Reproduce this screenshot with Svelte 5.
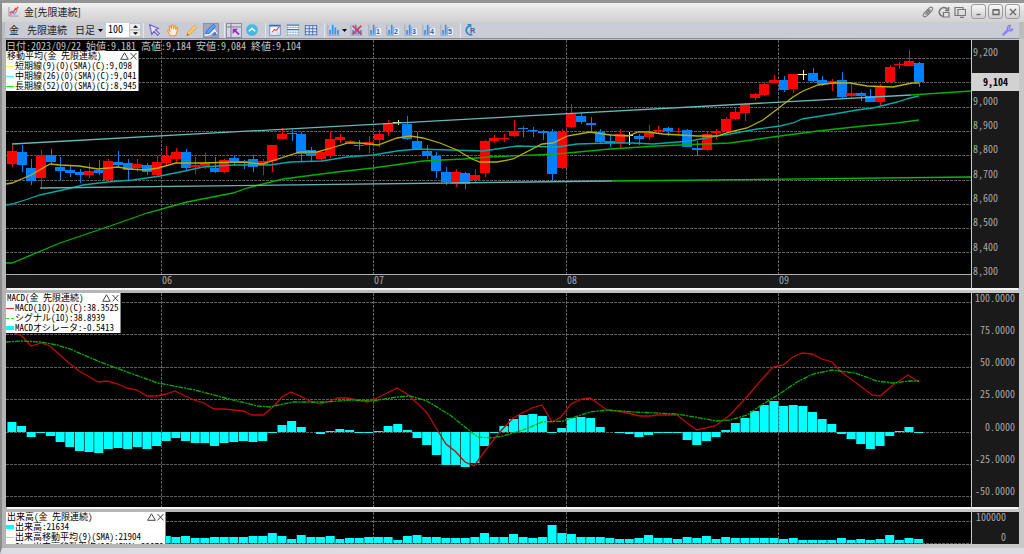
<script lang="ts">
	type Point = [number, number];

	const step = 9.646;
	const firstX = 12;
	const xAt = (i: number) => firstX + i * step;

	// kind (r = up, b = down, y = unchanged), body top, body bottom, high, low
	const candles: [string, number, number, number, number][] = [
		['r', 151, 164, 145, 167], ['b', 152, 165, 145, 172], ['b', 168, 181, 159, 185], ['r', 155, 178, 150, 188],
		['b', 155, 162, 149, 164], ['b', 167, 171, 157, 180], ['b', 170, 173, 166, 177], ['b', 172, 175, 169, 183],
		['r', 171, 175, 163, 178], ['b', 170, 173, 160, 175], ['r', 161, 180, 159, 182], ['b', 162, 165, 151, 167],
		['b', 163, 170, 159, 180], ['r', 164, 168, 159, 172], ['b', 165, 172, 163, 175], ['r', 162, 175, 156, 177],
		['r', 156, 163, 146, 165], ['r', 152, 159, 148, 163], ['b', 152, 168, 149, 171], ['r', 165, 167, 157, 174],
		['r', 163, 166, 153, 169], ['b', 168, 172, 157, 173], ['r', 160, 172, 159, 173], ['b', 158, 162, 156, 166],
		['b', 161, 162, 160, 169], ['b', 159, 167, 155, 172], ['r', 161, 165, 159, 175], ['r', 145, 161, 145, 172],
		['r', 134, 139, 128, 139], ['b', 133, 134, 129, 141], ['b', 134, 154, 132, 162], ['b', 150, 156, 147, 162],
		['r', 152, 159, 151, 162], ['r', 139, 156, 131, 158], ['r', 137, 140, 134, 143], ['r', 141, 143, 140, 144],
		['b', 145, 146, 140, 150], ['r', 142, 145, 136, 153], ['r', 134, 140, 130, 147], ['r', 123, 131, 120, 136],
		['y', 122, 123, 120, 125], ['b', 124, 139, 116, 140], ['b', 141, 149, 132, 150], ['b', 151, 156, 145, 159],
		['b', 156, 171, 152, 178], ['b', 172, 182, 167, 185], ['r', 172, 184, 169, 187], ['b', 173, 184, 172, 189],
		['r', 175, 180, 169, 182], ['r', 141, 173, 140, 177], ['r', 138, 141, 135, 143], ['r', 138, 139, 134, 142],
		['r', 131, 136, 120, 137], ['b', 128, 129, 126, 137], ['b', 130, 131, 127, 137], ['b', 131, 133, 130, 140],
		['b', 132, 174, 129, 182], ['r', 132, 168, 129, 169], ['r', 114, 127, 104, 128], ['b', 116, 122, 113, 124],
		['b', 123, 125, 117, 131], ['b', 132, 142, 129, 144], ['b', 141, 143, 134, 147], ['r', 134, 143, 129, 149],
		['y', 135, 136, 132, 145], ['b', 136, 139, 134, 145], ['r', 133, 137, 125, 140], ['r', 130, 131, 126, 133],
		['b', 128, 131, 127, 136], ['r', 131, 132, 128, 133], ['b', 130, 147, 129, 147], ['b', 148, 150, 141, 156],
		['r', 134, 150, 132, 151], ['r', 131, 133, 129, 139], ['r', 119, 131, 117, 133], ['r', 112, 119, 108, 120],
		['r', 104, 113, 103, 121], ['r', 94, 98, 93, 100], ['r', 84, 95, 83, 96], ['r', 80, 83, 75, 83],
		['b', 80, 90, 76, 92], ['r', 74, 89, 74, 93], ['y', 74, 75, 70, 80], ['b', 73, 81, 68, 82],
		['b', 80, 84, 76, 86], ['r', 81, 84, 79, 91], ['b', 80, 97, 72, 98], ['r', 93, 96, 84, 97],
		['b', 93, 96, 92, 101], ['b', 96, 102, 89, 102], ['r', 86, 102, 84, 105], ['r', 67, 82, 65, 83],
		['r', 64, 65, 62, 69], ['r', 61, 66, 50, 66], ['b', 63, 82, 62, 87]
	];

	const candleColors: Record<string, string> = { r: '#ff0000', b: '#0080ff', y: '#ffff80' };

	const shortMa: Point[] = [
		[6, 184], [12, 183], [31, 175], [50, 164], [60, 165], [79, 166], [98, 169], [118, 167], [129, 169], [146, 170],
		[158, 168], [176, 163], [200, 163], [240, 162], [262, 164], [300, 152], [317, 152], [328, 149], [348, 143],
		[360, 143], [378, 145], [397, 138], [410, 136], [423, 138], [440, 143], [457, 150], [472, 159], [480, 162],
		[497, 162], [513, 159], [542, 144], [553, 143], [567, 136], [590, 132], [610, 135], [628, 136], [638, 132],
		[648, 132], [663, 134], [697, 136], [717, 136], [730, 132], [747, 128], [763, 120], [780, 107], [793, 97],
		[803, 91], [818, 85], [833, 83], [850, 83], [867, 86], [893, 87], [912, 83], [919, 83]
	];
	const middleMa: Point[] = [
		[6, 205], [12, 204], [25, 200], [40, 195], [67, 189], [83, 185], [107, 182], [133, 180], [160, 176], [180, 172],
		[203, 167], [233, 165], [270, 165], [290, 162], [322, 161], [347, 157], [373, 155], [397, 151], [417, 149],
		[450, 150], [483, 151], [517, 146], [557, 147], [577, 144], [610, 143], [633, 143], [653, 144], [690, 141],
		[717, 136], [730, 134], [757, 129], [780, 126], [793, 123], [802, 119], [840, 113], [857, 110], [873, 108],
		[897, 102], [910, 98], [919, 96]
	];
	const longMa: Point[] = [
		[6, 263], [12, 263], [60, 243], [113, 225], [147, 213], [187, 202], [233, 193], [247, 188], [283, 179],
		[337, 172], [373, 168], [423, 161], [463, 159], [490, 157], [557, 154], [610, 149], [657, 146], [703, 144],
		[730, 143], [780, 136], [818, 131], [863, 126], [897, 123], [919, 120]
	];

	const macdLine: Point[] = [
		[6, 332], [12, 332], [22, 336], [31, 346], [41, 343], [50, 346], [60, 355], [69, 363], [79, 371], [88, 376],
		[98, 382], [107, 381], [118, 384], [127, 388], [137, 390], [147, 396], [157, 396], [166, 394], [175, 391],
		[185, 396], [194, 400], [204, 403], [214, 409], [224, 409], [243, 411], [252, 415], [263, 415], [273, 407],
		[282, 397], [291, 392], [300, 396], [310, 401], [320, 404], [330, 401], [338, 398], [348, 398], [357, 400],
		[367, 402], [373, 400], [387, 393], [397, 388], [407, 394], [417, 403], [427, 413], [438, 431], [446, 444],
		[455, 451], [465, 462], [474, 466], [485, 451], [498, 434], [513, 418], [522, 413], [532, 408], [542, 405],
		[552, 422], [561, 417], [571, 404], [582, 399], [590, 398], [607, 410], [623, 412], [640, 416], [650, 416],
		[657, 415], [677, 415], [687, 423], [697, 430], [715, 426], [730, 415], [745, 399], [763, 378], [773, 367],
		[783, 365], [793, 357], [802, 353], [812, 354], [822, 359], [832, 362], [840, 371], [855, 382], [872, 395],
		[880, 396], [893, 385], [908, 375], [919, 382]
	];
	const signalLine: Point[] = [
		[6, 342], [22, 341], [41, 342], [57, 345], [70, 349], [100, 362], [130, 373], [158, 383], [195, 390],
		[225, 398], [258, 406], [270, 407], [293, 402], [327, 402], [350, 400], [373, 401], [397, 397], [410, 396],
		[427, 401], [450, 415], [470, 431], [478, 437], [490, 438], [503, 436], [523, 430], [542, 422], [563, 421],
		[590, 412], [607, 410], [633, 412], [677, 414], [717, 421], [730, 420], [747, 415], [763, 404], [778, 395],
		[797, 382], [813, 374], [832, 370], [855, 373], [877, 381], [893, 383], [910, 381], [919, 381]
	];

	const oscillator = [
		10, 6, -5, -1, -4, -10, -15, -19, -20, -21, -17, -16, -17, -15, -17, -14, -9, -6, -9, -11, -11, -14, -11, -10,
		-9, -10, -9, -1, 7, 11, 5, 0, -2, 1, 3, 2, -1, -1, 1, 6, 8, 2, -6, -13, -23, -33, -33, -35, -31, -14, -1, 6,
		13, 17, 18, 16, -1, 4, 14, 15, 14, 5, 0, -1, -2, -5, -3, -1, -1, -1, -8, -13, -9, -5, 2, 9, 14, 21, 27, 31,
		26, 27, 26, 20, 13, 8, -2, -7, -12, -17, -14, -4, 1, 5, -1
	];

	const volumes = [
		6, 6, 7, 6, 5, 6, 6, 5, 6, 6, 7, 6, 6, 5, 6, 6, 7, 6, 7, 5, 5, 6, 6, 6, 6, 7, 7, 10, 7, 4, 8, 6, 6, 7, 4, 5,
		5, 6, 6, 6, 3, 7, 8, 6, 6, 5, 5, 5, 6, 10, 6, 6, 9, 6, 5, 6, 18, 10, 9, 6, 6, 6, 5, 4, 4, 5, 8, 5, 5, 4, 6,
		5, 7, 4, 6, 5, 5, 5, 5, 5, 4, 5, 3, 3, 3, 3, 5, 3, 4, 3, 4, 8, 3, 5, 4
	];

	const monthLines = [161, 373, 566, 778];
	const priceLines = [58, 82, 107, 131, 155, 180, 204, 228, 252];
	const macdGrid = [302, 334, 367, 399, 432, 464, 496];

	const priceLabels = ['9,200', '', '9,000', '8,900', '8,800', '8,700', '8,600', '8,500', '8,400', '8,300'];
	const macdLabels = ['100.0000', '75.0000', '50.0000', '25.0000', '0.0000', '-25.0000', '-50.0000'];

	const priceLegend = [
		{ color: '#ffff40', text: '短期線(9)(0)(SMA)(C):9,098' },
		{ color: '#40ffff', text: '中期線(26)(0)(SMA)(C):9,041' },
		{ color: '#00ff00', text: '長期線(52)(0)(SMA)(C):8,945' }
	];
	const macdLegend = [
		{ color: '#ff2020', text: 'MACD(10)(20)(C):38.3525' },
		{ color: '#20e020', text: 'シグナル(10):38.8939', kind: 'dashed' },
		{ color: '#00ffff', text: 'MACDオシレータ:-0.5413', kind: 'block' }
	];
	const volumeLegend = [
		{ color: '#00ffff', text: '出来高:21634', kind: 'block' },
		{ color: '#80ff80', text: '出来高移動平均(9)(SMA):21904' },
		{ color: '#ffff80', text: 'Slow出来高移動平均(26)(SMA):22070' }
	];

	let barCount = $state(100);
	let period = $state('日足');

	const toPoints = (points: Point[]) => points.map((p) => p.join(',')).join(' ');
</script>

{#snippet legend(title: string, rows: { color: string; text: string; kind?: string }[])}
	<div class="legend">
		<div class="legend-title">
			<span>{title}</span>
			<span class="legend-buttons">
				<button aria-label="折りたたむ">
					<svg viewBox="0 0 9 8"><path d="M4.5 .8 8.3 7.3H.7z" /></svg>
				</button>
				<button aria-label="閉じる">
					<svg viewBox="0 0 7 8"><path d="M.5 1 6.5 7.4M6.5 1 .5 7.4" /></svg>
				</button>
			</span>
		</div>
		{#each rows as row}
			<div class="legend-row">
				<i class="swatch {row.kind ?? ''}" style="color: {row.color}"></i>
				<span>{row.text}</span>
			</div>
		{/each}
	</div>
{/snippet}

{#snippet bars()}
	<path d="M1 2v12h14" fill="none" stroke="#98a4b4" />
	<path d="M2.5 8h2v5h-2zM5.5 2h2v11h-2zM8.5 5h2v8h-2zM11.5 8h2v5h-2z" fill="#3894f4" />
{/snippet}

<div class="window">
	<header class="titlebar">
		<svg class="logo" viewBox="0 0 12 12">
			<path d="M1 1v10h11" fill="none" stroke="#999" />
			<path d="M2 8l2-2 2 1 2-4 1 1 2-3" fill="none" stroke="#f04050" stroke-width="1.5" />
			<path d="M2 10l3-2 2 1 3-4" fill="none" stroke="#6080e0" />
		</svg>
		<h1>金[先限連続]</h1>
		<div class="title-tools">
			<button aria-label="リンク">
				<svg viewBox="0 0 12 12" fill="none" stroke="#808080" stroke-width="1.2">
					<ellipse cx="4.5" cy="7.5" rx="4" ry="2" transform="rotate(-45 4.5 7.5)" />
					<ellipse cx="7.5" cy="4.5" rx="4" ry="2" transform="rotate(-45 7.5 4.5)" />
					<path d="M3.5 8.500l5-5" />
				</svg>
			</button>
			<button aria-label="元に戻す">
				<svg viewBox="0 0 12 12" fill="none" stroke="#777" stroke-width="1.6">
					<path d="M9.5 3.5A4.5 4.5 0 1 0 5 10.5" />
					<path d="M10.5 1v3.5H7" />
					<path d="M5.5 6.5h5.5v4.5H5.5z" fill="#e4e4e4" stroke-width="1.2" />
				</svg>
			</button>
			<button aria-label="複製">
				<svg viewBox="0 0 12 12" fill="none" stroke="#777" stroke-width="1.2">
					<path d="M4 9.500H1V1.500h8V3" />
					<path d="M4 3.500h7.500v6H4zM6 11.400h4" />
				</svg>
			</button>
		</div>
		<div class="window-buttons">
			<button aria-label="最小化"><svg viewBox="0 0 10 10"><path d="M2.5 7.5h4" /></svg></button>
			<button aria-label="最大化"><svg viewBox="0 0 10 10"><path d="M2 3h6v4.500h-6zM2 2.600h6" /></svg></button>
			<button aria-label="閉じる"><svg viewBox="0 0 10 10"><path d="M2 2l6 6M8 2L2 8" /></svg></button>
		</div>
	</header>

	<div class="toolbar">
		<span class="symbol">金</span>
		<span class="contract">先限連続</span>
		<div class="period">
			<select aria-label="足種" bind:value={period}>
				<option>日足</option>
				<option>週足</option>
				<option>月足</option>
			</select>
			<svg class="caret" viewBox="0 0 5 3"><path d="M0 0h5L2.5 3z" /></svg>
		</div>
		<div class="count">
			<input type="text" aria-label="本数" bind:value={barCount} />
			<div class="spinner">
				<button aria-label="増やす" onclick={() => barCount++}>
					<svg viewBox="0 0 6 3"><path d="M0 3h6L3 0z" /></svg>
				</button>
				<button aria-label="減らす" onclick={() => barCount--}>
					<svg viewBox="0 0 6 3"><path d="M0 0h6L3 3z" /></svg>
				</button>
			</div>
		</div>

		<div class="tools draw-tools">
			<button aria-label="選択">
				<svg viewBox="0 0 16 16"><path d="M3 2l10 4-3.500 1.800L14 12l-2 2-4-4.500L5.500 13z" fill="#e8e4ff" stroke="#6a58c8" stroke-width="1.200" /></svg>
			</button>
			<button aria-label="移動">
				<svg viewBox="0 0 16 16">
					<path d="M5 14.500 2 9.500q-.5-1.500 1-1.500l1.500 1.300L3.600 4q.4-1.200 1.500-.3L6.500 7 6.400 2.500q.9-1.200 1.600 0L8.600 7l1-4q.9-1 1.500.1L11 7.600l1.200-2.200q1.200-.6 1.300.6L12 12l-1 2.500z" fill="#fff0d8" stroke="#e89a38" stroke-width="1.200" />
				</svg>
			</button>
			<button aria-label="描画">
				<svg viewBox="0 0 16 16">
					<path d="M2 14.500l1-4L11 2.500 13.500 5 6 13z" fill="#ffc868" stroke="#e8a040" />
					<path d="M2 14.500l1-2.500L4.500 13.500z" fill="#775030" />
				</svg>
			</button>
			<button class="pressed" aria-label="ライン描画">
				<svg viewBox="0 0 16 16">
					<path d="M2 13l1-4L10.500 1.500 13 4 5.500 12z" fill="#58a4f8" stroke="#2868c8" />
					<path d="M1 14l6-1 5-5 3 5" fill="none" stroke="#fff" stroke-width="1.500" />
					<path d="M9 14.500l4-4.500 2 4z" fill="#3878d8" />
				</svg>
			</button>
		</div>
		<div class="tools view-tools">
			<button class="pressed light" aria-label="カーソル値">
				<svg viewBox="0 0 16 16">
					<path d="M0 4.500h16M4.500 0v16" stroke="#706890" />
					<path d="M6.500 6.500h6l-2 2 4 4-1.500 1.500-4-4-2.500 2.500z" fill="#9030b8" />
				</svg>
			</button>
			<button aria-label="上へ">
				<svg viewBox="0 0 16 16">
					<circle cx="8" cy="8" r="6.500" fill="#40b8e8" stroke="#70b8d8" />
					<path d="M4.500 9.500 8 6l3.500 3.500" fill="none" stroke="#fff" stroke-width="1.800" />
				</svg>
			</button>
		</div>
		<div class="tools panel-tools">
			<button aria-label="チャート">
				<svg viewBox="0 0 16 16">
					<path d="M2 3h12v11H2z" fill="#fff" stroke="#5888c8" />
					<path d="M1.500 3h13" stroke="#3070c0" stroke-width="2" />
					<path d="M2.500 11.500h11M11 5v9" stroke="#c0cce0" />
					<path d="M4.500 10.500l3-3 1.500 1 4-4" fill="none" stroke="#f05050" stroke-width="1.300" />
				</svg>
			</button>
			<button aria-label="一覧">
				<svg viewBox="0 0 16 16">
					<path d="M2 2h12v12H2z" fill="#f4f8fc" />
					<path d="M1 2.500h14M1 7.500h14" stroke="#3878b8" stroke-width="1.500" />
					<path d="M1 5h14M1 10.500h14M1 13.500h14" stroke="#5888b0" stroke-dasharray="2 1" />
				</svg>
			</button>
			<button aria-label="グリッド">
				<svg viewBox="0 0 16 16">
					<path d="M2 3h12v11H2z" fill="#dfe8f8" />
					<path d="M1 3h14M1 6.500h14M1 10h14M1 13.500h14M1.500 3v11M6 3v11M10 3v11M14.500 3v11" fill="none" stroke="#4068b0" />
				</svg>
			</button>
		</div>
		<div class="tools bar-tools">
			<button aria-label="指標">
				<svg viewBox="0 0 16 16">{@render bars()}</svg>
			</button>
			<svg class="caret" viewBox="0 0 5 3"><path d="M0 0h5L2.5 3z" /></svg>
			<button aria-label="指標を消す">
				<svg viewBox="0 0 16 16">
					{@render bars()}
					<path d="M3 3l10 10M13 3L3 13" stroke="#f03848" stroke-width="2" />
				</svg>
			</button>
			{#each [1, 2, 3, 4, 5] as n}
				<button class="preset" aria-label="指標セット{n}">
					<svg viewBox="0 0 16 16">
						{@render bars()}
						<path d="M9 6h6v8H9z" fill="#eef2f8" />
						<text x="9" y="13">{n}</text>
					</svg>
				</button>
			{/each}
		</div>
		<div class="tools reload-tools">
			<button class="preset" aria-label="再読込">
				<svg viewBox="0 0 16 16">
					<path d="M7 3.500A5 5 0 1 0 10.500 13" fill="none" stroke="#2888d0" stroke-width="2" />
					<path d="M4.500 1h5v5z" fill="#2888d0" />
					<text x="8" y="11">R</text>
				</svg>
			</button>
		</div>
		<button class="settings" aria-label="設定">
			<svg viewBox="0 0 12 12">
				<path d="M1.500 10.500 7 5" stroke="#8888f0" stroke-width="2.500" stroke-linecap="round" />
				<path d="M8.500 1.200a3 3 0 1 0 2.600 3.800L8.500 5.300 7.200 4z" fill="#a8a8f8" stroke="#7878e8" />
			</svg>
		</button>
	</div>

	<main>
		<section class="panel price-panel">
			<div class="plot">
				<svg viewBox="6 40 965 234" preserveAspectRatio="none">
					<g class="grid">
						{#each priceLines as y}<path d="M6 {y + 0.5}H971" />{/each}
						{#each monthLines as x}<path d="M{x + 0.5} 40V274" />{/each}
					</g>
					<g class="candles">
						{#each candles as [kind, top, bottom, high, low], i}
							<g fill={candleColors[kind]}>
								<rect x={Math.round(xAt(i))} y={high} width="1" height={low - high} />
								<rect x={Math.round(xAt(i)) - 5} y={top} width={kind === 'y' ? 9 : 10} height={bottom - top} />
							</g>
						{/each}
					</g>
					<g class="lines">
						<polyline points={toPoints(longMa)} stroke="#00b000" />
						<polyline points={toPoints(middleMa)} stroke="#00a8a8" />
						<polyline points={toPoints(shortMa)} stroke="#b8b000" />
						<path d="M12 144 911 95" stroke="#68b8b8" />
						<path d="M911 95 971 91" stroke="#00b000" />
						<path d="M40 188 612 181" stroke="#68b0b0" />
						<path d="M612 181 971 177" stroke="#00c000" />
					</g>
				</svg>
				<div class="overlay">
					<p class="quote">日付:2023/09/22 始値:9,181 高値:9,184 安値:9,084 終値:9,104</p>
					{@render legend('移動平均(金 先限連続)', priceLegend)}
				</div>
			</div>
			<div class="axis price-axis">
				{#each priceLabels as label}<span>{label}</span>{/each}
				<strong class="last-price">9,104</strong>
			</div>
			<div class="months">
				<span></span>
				<span>06</span>
				<span>07</span>
				<span>08</span>
				<span>09</span>
			</div>
		</section>

		<section class="panel macd-panel">
			<div class="plot">
				<svg viewBox="6 293 965 214" preserveAspectRatio="none">
					<g class="grid">
						{#each macdGrid as y}<path d="M6 {y + 0.5}H971" />{/each}
						{#each monthLines as x}<path d="M{x + 0.5} 293V507" />{/each}
					</g>
					<g class="bars">
						{#each oscillator as value, i}
							<rect x={xAt(i) - 4.6} y={value > 0 ? 432 - value : 432} width="9" height={Math.abs(value)} />
						{/each}
					</g>
					<g class="lines">
						<polyline points={toPoints(macdLine)} stroke="#c00808" />
						<polyline points={toPoints(signalLine)} stroke="#00b000" stroke-dasharray="5 1 2 1" />
					</g>
				</svg>
				<div class="overlay">
					{@render legend('MACD(金 先限連続)', macdLegend)}
				</div>
			</div>
			<div class="axis macd-axis">
				{#each macdLabels as label}<span>{label}</span>{/each}
			</div>
		</section>

		<section class="panel volume-panel">
			<div class="plot">
				<svg viewBox="6 512 965 32" preserveAspectRatio="none">
					<g class="grid">
						<path d="M6 521.5H971M6 543.5H971" />
						{#each monthLines as x}<path d="M{x + 0.5} 512V544" />{/each}
					</g>
					<g class="bars">
						{#each volumes as value, i}
							<rect x={xAt(i) - 4.6} y={543 - value} width="9" height={value} />
						{/each}
					</g>
				</svg>
				<div class="overlay">
					{@render legend('出来高(金 先限連続)', volumeLegend)}
				</div>
			</div>
			<div class="axis volume-axis">
				<span>100000</span>
				<span>0</span>
			</div>
		</section>
	</main>
</div>

<style>
	:global(body) {
		margin: 0;
	}

	.window {
		display: flex;
		flex-direction: column;
		height: 100vh;
		box-sizing: border-box;
		border-top: 3px solid #929496;
		border-left: 2px solid #8c8c8c;
		border-bottom: 6px solid #dcdce2;
		background: #bcbcbc;
		font-family: 'Noto Sans CJK JP', 'Liberation Sans', sans-serif;
		font-size: 10px;
		line-height: 10px;
		color: #222;
	}

	button {
		display: flex;
		align-items: center;
		justify-content: center;
		padding: 0;
		border: 0;
		background: none;
		cursor: pointer;
	}

	.titlebar {
		display: flex;
		align-items: center;
		flex: 0 0 19px;
		padding: 0 4px 2px 6px;
		box-sizing: border-box;
		background: linear-gradient(#f0f0f0, #dedede 50%, #d2d2d2);
	}

	.logo {
		width: 11px;
		height: 11px;
		margin-right: 5px;
	}

	h1 {
		margin: 0;
		font-size: 10px;
		font-weight: 400;
	}

	.title-tools {
		display: flex;
		gap: 4px;
		margin-left: auto;
	}

	.title-tools svg {
		width: 12px;
		height: 12px;
	}

	.window-buttons {
		display: flex;
		gap: 2px;
		margin-left: 5px;
	}

	.window-buttons button {
		width: 15px;
		height: 15px;
		box-sizing: border-box;
		border: 1px solid #9c9c9c;
		border-radius: 3px;
		background: linear-gradient(#f8f8f8, #cfcfcf);
	}

	.window-buttons svg {
		width: 10px;
		height: 10px;
		fill: none;
		stroke: #666;
		stroke-width: 1.3;
	}

	.toolbar {
		display: flex;
		align-items: center;
		flex: 0 0 16px;
		margin-left: 3px;
		margin-right: 5px;
		padding-left: 4px;
		background: #c9ccd5;
		border-bottom: 1px solid #888c98;
	}

	.contract {
		margin: 0 8px;
	}

	.caret {
		width: 5px;
		height: 3px;
	}

	.period {
		display: flex;
		align-items: center;
		gap: 2px;
	}

	select {
		appearance: none;
		width: 21px;
		padding: 0;
		border: 0;
		background: none;
		font: inherit;
		color: inherit;
	}

	.count {
		display: flex;
		height: 14px;
		margin-left: 3px;
		background: #fff;
	}

	.count input {
		width: 21px;
		padding: 0 0 3px 2px;
		border: 0;
		background: none;
		font: inherit;
		font-feature-settings: 'hwid';
	}

	.spinner {
		display: flex;
		flex-direction: column;
		width: 12px;
	}

	.spinner button {
		flex: 1;
		border: 1px solid #c8c8c8;
		background: #ececec;
	}

	.spinner svg {
		width: 5px;
		height: 3px;
	}

	.tools {
		display: flex;
		align-items: center;
		gap: 2px;
	}

	.tools button {
		width: 16px;
		height: 15px;
	}

	.tools button svg {
		width: 14px;
		height: 14px;
	}

	.tools .pressed {
		background: #a0a8c0;
		box-shadow: inset 0 0 0 1px #8890ac;
	}

	.tools .pressed.light {
		background: #d8d4e4;
	}

	.draw-tools {
		gap: 3px;
		margin-left: 2px;
		padding-left: 2px;
		border-left: 1px solid #e4e6ec;
	}

	.view-tools,
	.panel-tools,
	.bar-tools,
	.reload-tools {
		margin-left: 5px;
		padding-left: 1px;
		border-left: 1px solid #e4e6ec;
	}

	.bar-tools .caret {
		margin-left: -2px;
	}

	.preset text {
		fill: #2860b0;
		font-family: 'Liberation Sans', sans-serif;
		font-size: 8px;
		font-weight: 700;
	}

	.settings {
		margin-left: auto;
		margin-right: 5px;
	}

	.settings svg {
		width: 12px;
		height: 12px;
		fill: none;
	}

	main {
		display: flex;
		flex-direction: column;
		flex: 1;
		gap: 5px;
		min-height: 0;
		padding: 1px 5px 4px 4px;
		background: linear-gradient(90deg, #b4b4b4, #c8c8c8);
	}

	.panel {
		display: grid;
		grid-template-columns: minmax(0, 1fr) 48px;
		min-height: 0;
		box-shadow: 0 3px 0 -1px #f6f6f6;
	}

	.price-panel {
		flex: 248 1 0;
		grid-template-rows: minmax(0, 1fr) 14px;
	}

	.macd-panel {
		flex: 214 1 0;
	}

	.volume-panel {
		flex: 32 1 0;
		box-shadow: none;
	}

	.plot {
		position: relative;
		min-height: 0;
		overflow: hidden;
		background: #000;
	}

	.plot > svg {
		display: block;
		width: 100%;
		height: 100%;
	}

	.overlay {
		position: absolute;
		top: 0;
		left: 0;
		font-feature-settings: 'hwid';
	}

	.grid path {
		fill: none;
		stroke: #5e5e5e;
		stroke-dasharray: 3 1;
		shape-rendering: crispEdges;
	}

	.candles {
		shape-rendering: crispEdges;
	}

	.bars {
		fill: #00ffff;
	}

	.lines {
		fill: none;
		stroke-width: 1.3;
	}

	.quote {
		margin: 0;
		padding-top: 1px;
		white-space: nowrap;
		color: #c4c4c4;
	}

	.legend {
		width: max-content;
		padding-right: 1px;
		background: #fff;
		border-right: 1px solid #888;
		color: #000;
		font-size: 9px;
		white-space: nowrap;
	}

	.legend-title {
		display: flex;
		justify-content: space-between;
		padding-left: 1px;
	}

	.legend-buttons {
		display: flex;
		gap: 1px;
	}

	.legend-buttons svg {
		height: 8px;
		fill: none;
		stroke: #444;
	}

	.legend-row {
		display: flex;
		align-items: center;
		gap: 1px;
	}

	.swatch {
		width: 8px;
		border-top: 1px solid;
	}

	.swatch.dashed {
		border-top-style: dashed;
	}

	.swatch.block {
		height: 3px;
		background: currentColor;
	}

	.axis {
		position: relative;
		display: flex;
		flex-direction: column;
		justify-content: space-between;
		box-sizing: border-box;
		min-height: 0;
		background: #1a1a1a;
		border-left: 1px solid #c8c8c8;
		color: #a8a8a8;
		font-feature-settings: 'hwid';
	}

	.axis span {
		height: 10px;
	}

	.price-axis {
		grid-row: 1 / 3;
		grid-column: 2;
		padding: 7px 0 12px 1px;
	}

	.last-price {
		position: absolute;
		top: 33px;
		left: 0;
		right: 0;
		background: #d2d2d2;
		color: #000;
		line-height: 18px;
		text-align: center;
	}

	.months {
		display: grid;
		grid-template-columns: 156fr 212fr 193fr 212fr 192fr;
		box-sizing: border-box;
		background: #1a1a1a;
		border-top: 1px solid #b0b0b0;
		color: #a8a8a8;
		font-feature-settings: 'hwid';
	}

	.macd-axis {
		padding: 0 4px 11px 0;
		text-align: right;
	}

	.volume-axis {
		padding: 0 13px 2px 0;
		text-align: right;
	}
</style>
